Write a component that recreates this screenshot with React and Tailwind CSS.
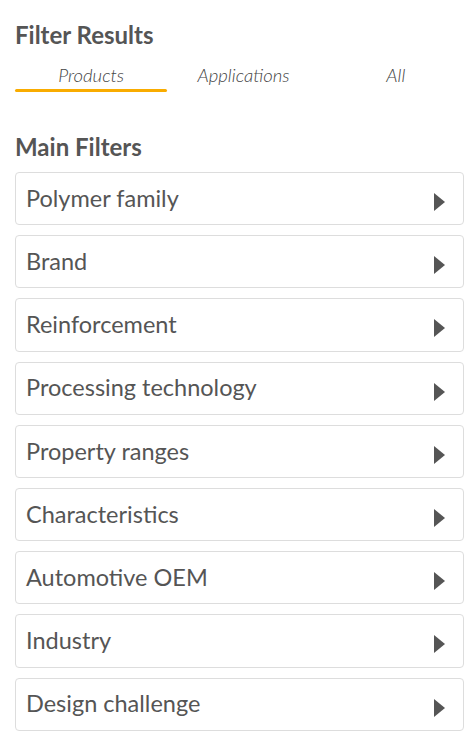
const filters = [
  'Polymer family',
  'Brand',
  'Reinforcement',
  'Processing technology',
  'Property ranges',
  'Characteristics',
  'Automotive OEM',
  'Industry',
  'Design challenge',
]

const tabs = ['Products', 'Applications', 'All']

export default function App() {
  return (
    <div className="min-h-[748px] bg-white pl-[15px] pt-[20px] text-[#555] font-['Lato',sans-serif]">
      <h2 className="text-[24px] font-bold leading-[30px]">Filter Results</h2>

      {/* Tabs */}
      <div className="mt-[14px] grid w-[457px] grid-cols-3">
        {tabs.map((t, i) => (
          <div key={t} className="flex h-[28px] flex-col">
            <span className="h-[25px] text-center text-[18.5px] font-light italic leading-[22px] text-[#444]">{t}</span>
            {i === 0 && <div className="h-[3px] rounded-full bg-[#f9ac00]" />}
          </div>
        ))}
      </div>

      <h2 className="mt-[40px] text-[24px] font-bold leading-[30px]">Main Filters</h2>

      <div className="mt-[10px] flex w-[449px] flex-col gap-[10px]">
        {filters.map((f) => (
          <div
            key={f}
            className="flex h-[53.2px] items-center justify-between rounded border border-[#ddd] pl-[10px] pr-[18px]"
          >
            <span className="text-[23.5px] leading-none">{f}</span>
            <svg width="11" height="18" viewBox="0 0 11 18" className="mt-[7px]">
              <path d="M0 0 L11 9 L0 18 Z" fill="#555" />
            </svg>
          </div>
        ))}
      </div>
    </div>
  )
}
